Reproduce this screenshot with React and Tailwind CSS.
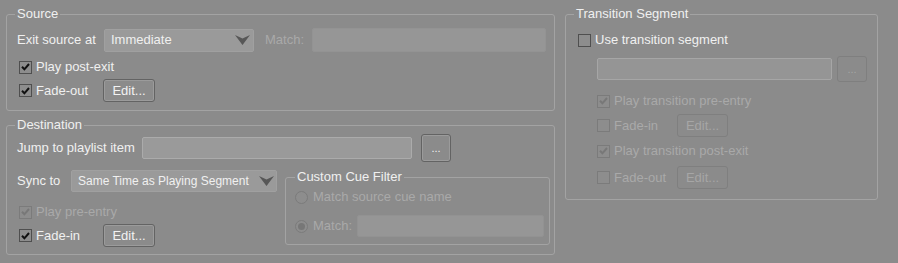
import React from "react";

function Check({ checked, disabled }) {
  return (
    <span
      className={`flex items-center justify-center w-[13px] h-[13px] shrink-0 border bg-[#8d8d8d] ${
        disabled ? "border-[#7b7b7b]" : "border-[#4f4f4f]"
      }`}
    >
      {checked && (
        <svg width="9" height="8" viewBox="0 0 9 8">
          <path
            d="M1 3.8 L3.4 6.3 L8 1"
            stroke={disabled ? "#787878" : "#111111"}
            strokeWidth="2"
            fill="none"
          />
        </svg>
      )}
    </span>
  );
}

function Radio({ dot }) {
  return (
    <span className="flex items-center justify-center w-[13px] h-[13px] shrink-0 rounded-full border border-[#7b7b7b] bg-[#8d8d8d]">
      {dot && <span className="w-[7px] h-[7px] rounded-full bg-[#777777]" />}
    </span>
  );
}

function Btn({ children, disabled, className }) {
  return (
    <div
      className={`flex items-center justify-center rounded-[3px] border ${
        disabled
          ? "border-[#7f7f7f] text-[#a6a6a6]"
          : "border-[#636363] text-[#f2f2f2] shadow-[inset_0_0_0_1px_#9b9b9b]"
      } ${className}`}
    >
      {children}
    </div>
  );
}

function Arrow() {
  return (
    <svg width="15" height="10" viewBox="0 0 15 10" className="shrink-0">
      <polygon points="0,0 7.5,3.5 15,0 7.5,10" fill="#575757" />
    </svg>
  );
}

export default function App() {
  const fs = "border border-[#a3a3a3] rounded-[3px] min-w-0";
  const lg = "px-[2px] leading-[16px] text-[#f0f0f0]";
  return (
    <div className="w-[898px] h-[263px] bg-[#8b8b8b] flex items-start pt-[6px] pl-[6px] gap-[10px] text-[13px] leading-[16px] text-[#f0f0f0] font-['Liberation_Sans',Arial,sans-serif]">
      {/* Left column */}
      <div className="flex flex-col w-[549px] gap-[6px]">
        {/* Source */}
        <fieldset className={`${fs} w-[549px] pl-[8px] pb-[8px]`}>
          <legend className={lg}>Source</legend>
          <div className="flex items-center h-[24px] mt-[6px]">
            <span className="ml-[2px] w-[87px]">Exit source at</span>
            <div className="flex items-center justify-between w-[150px] h-[23px] rounded-[2px] border border-[#a0a0a0] bg-[#9a9a9a] pl-[6px] pr-[3px]">
              <span>Immediate</span>
              <Arrow />
            </div>
            <span className="ml-[11px] w-[47px] text-[#a9a9a9]">Match:</span>
            <div className="w-[234px] h-[24px] rounded-[2px] border border-[#939393] bg-[#969696]" />
          </div>
          <div className="flex items-center h-[20px] mt-[5px]">
            <span className="ml-[4px]"><Check checked /></span>
            <span className="ml-[4px]">Play post-exit</span>
          </div>
          <div className="flex items-center h-[23px] mt-[2px]">
            <span className="ml-[4px]"><Check checked /></span>
            <span className="ml-[4px] w-[67px]">Fade-out</span>
            <Btn className="w-[52px] h-[23px]">Edit...</Btn>
          </div>
        </fieldset>

        {/* Destination */}
        <fieldset className={`${fs} w-[549px] pl-[8px] pb-[7px]`}>
          <legend className={lg}>Destination</legend>
          <div className="flex items-center h-[28px] mt-[1px]">
            <span className="ml-[2px] w-[125px]">Jump to playlist item</span>
            <div className="w-[270px] h-[22px] rounded-[2px] border border-[#ababab] bg-[#9a9a9a]" />
            <Btn className="ml-[9px] w-[30px] h-[28px] text-[11px]">...</Btn>
          </div>
          <div className="flex items-start mt-[7px]">
            <div className="flex flex-col w-[270px]">
              <div className="flex items-center h-[22px] mt-[1px]">
                <span className="ml-[2px] w-[54px]">Sync to</span>
                <div className="flex items-center justify-between w-[206px] h-[22px] rounded-[2px] border border-[#a0a0a0] bg-[#9a9a9a] pl-[6px] pr-[2px]">
                  <span className="text-[12px]">Same Time as Playing Segment</span>
                  <Arrow />
                </div>
              </div>
              <div className="flex items-center h-[20px] mt-[10px]">
                <span className="ml-[4px]"><Check checked disabled /></span>
                <span className="ml-[4px] text-[#a9a9a9]">Play pre-entry</span>
              </div>
              <div className="flex items-center h-[23px] mt-[2px]">
                <span className="ml-[4px]"><Check checked /></span>
                <span className="ml-[4px] w-[67px]">Fade-in</span>
                <Btn className="w-[52px] h-[23px]">Edit...</Btn>
              </div>
            </div>
            <fieldset className={`${fs} w-[265px] pl-[9px] pb-[7px]`}>
              <legend className={lg}>Custom Cue Filter</legend>
              <div className="flex items-center h-[20px] mt-[2px]">
                <Radio />
                <span className="ml-[5px] text-[#a9a9a9]">Match source cue name</span>
              </div>
              <div className="flex items-center h-[22px] mt-[8px]">
                <Radio dot />
                <span className="ml-[5px] w-[44px] text-[#a9a9a9]">Match:</span>
                <div className="w-[187px] h-[22px] rounded-[2px] border border-[#929292] bg-[#969696]" />
              </div>
            </fieldset>
          </div>
        </fieldset>
      </div>

      {/* Transition Segment */}
      <fieldset className={`${fs} w-[313px] pl-[8px] pb-[10px]`}>
        <legend className={lg}>Transition Segment</legend>
        <div className="flex items-center h-[20px] mt-[8px]">
          <span className="ml-[4px]"><Check /></span>
          <span className="ml-[4px]">Use transition segment</span>
        </div>
        <div className="flex items-center h-[26px] mt-[6px]">
          <div className="ml-[23px] w-[235px] h-[22px] rounded-[2px] border border-[#a6a6a6] bg-[#959595]" />
          <Btn disabled className="ml-[5px] w-[30px] h-[26px] text-[11px]">...</Btn>
        </div>
        <div className="flex items-center h-[20px] mt-[9px]">
          <span className="ml-[23px]"><Check checked disabled /></span>
          <span className="ml-[4px] text-[#a9a9a9]">Play transition pre-entry</span>
        </div>
        <div className="flex items-center h-[23px] mt-[3px]">
          <span className="ml-[23px]"><Check disabled /></span>
          <span className="ml-[4px] w-[63px] text-[#a9a9a9]">Fade-in</span>
          <Btn disabled className="w-[51px] h-[23px]">Edit...</Btn>
        </div>
        <div className="flex items-center h-[20px] mt-[4px]">
          <span className="ml-[23px]"><Check checked disabled /></span>
          <span className="ml-[4px] text-[#a9a9a9]">Play transition post-exit</span>
        </div>
        <div className="flex items-center h-[23px] mt-[5px]">
          <span className="ml-[23px]"><Check disabled /></span>
          <span className="ml-[4px] w-[63px] text-[#a9a9a9]">Fade-out</span>
          <Btn disabled className="w-[51px] h-[23px]">Edit...</Btn>
        </div>
      </fieldset>
    </div>
  );
}
